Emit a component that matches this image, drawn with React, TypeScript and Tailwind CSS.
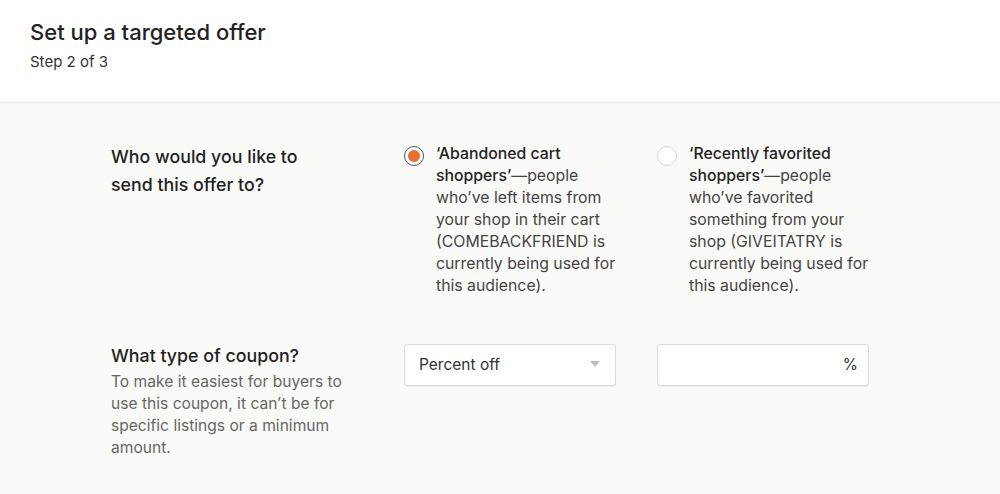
import React, { useState } from "react";

const font = { fontFamily: "Inter, 'Noto Sans', sans-serif" };

function Radio({ checked }: { checked: boolean }) {
  return (
    <span
      className={`mt-[3px] flex h-5 w-5 shrink-0 items-center justify-center rounded-full border bg-white ${
        checked ? "border-[#555]" : "border-[#d6d6d6]"
      }`}
    >
      {checked && <span className="h-3 w-3 rounded-full bg-[#eb6d2f]" />}
    </span>
  );
}

function Option({
  checked,
  title,
  body,
  onSelect,
}: {
  checked: boolean;
  title: string;
  body: string;
  onSelect: () => void;
}) {
  return (
    <label className="flex cursor-pointer gap-3" onClick={onSelect}>
      <Radio checked={checked} />
      <p className="w-[192px] text-[15.8px] leading-[22px] text-[#444]">
        <span className="font-medium text-[#222]">{title}</span>
        {body}
      </p>
    </label>
  );
}

export default function App() {
  const [audience, setAudience] = useState("abandoned");

  return (
    <div className="min-h-[494px] bg-[#fafaf8] text-[#222]" style={font}>
      {/* Header */}
      <div className="border-b border-[#e3e3e1] bg-white px-[30px] pt-[17px] pb-[30px]">
        <h1 className="text-[22px] leading-[30px] font-medium">Set up a targeted offer</h1>
        <p className="mt-[5px] text-[15px] leading-[20px] text-[#333]">Step 2 of 3</p>
      </div>

      {/* Body */}
      <div className="pl-[111px] pt-[40px]">
        <div className="flex">
          <div className="w-[293px]">
            <h2 className="w-[220px] text-[17.8px] leading-[28px] font-medium">
              Who would you like to send this offer to?
            </h2>
          </div>
          <div className="w-[253px]">
            <Option
              checked={audience === "abandoned"}
              onSelect={() => setAudience("abandoned")}
              title="‘Abandoned cart shoppers’"
              body="—people who’ve left items from your shop in their cart (COMEBACKFRIEND is currently being used for this audience)."
            />
          </div>
          <div>
            <Option
              checked={audience === "favorited"}
              onSelect={() => setAudience("favorited")}
              title="‘Recently favorited shoppers’"
              body="—people who’ve favorited something from your shop (GIVEITATRY is currently being used for this audience)."
            />
          </div>
        </div>

        <div className="mt-[47px] flex">
          <div className="w-[293px]">
            <h2 className="text-[17.8px] leading-[24px] font-medium">What type of coupon?</h2>
            <p className="mt-[3px] w-[245px] text-[15.6px] leading-[22px] text-[#666]">
              To make it easiest for buyers to use this coupon, it can’t be for specific listings or a minimum amount.
            </p>
          </div>
          <div className="w-[253px]">
            <div className="flex h-[42px] w-[212px] items-center justify-between rounded-[3px] border border-[#dcdcdc] bg-white px-[14px] shadow-[0_1px_1px_rgba(0,0,0,0.06)]">
              <span className="text-[15.5px] text-[#333]">Percent off</span>
              <svg width="10" height="6" viewBox="0 0 10 6" className="mb-[2px] mr-[1px]">
                <path d="M0 0h10L5 6z" fill="#bdbdbd" />
              </svg>
            </div>
          </div>
          <div>
            <div className="flex h-[42px] w-[212px] items-center justify-end rounded-[3px] border border-[#dcdcdc] bg-white px-[10px] shadow-[0_1px_1px_rgba(0,0,0,0.06)]">
              <span className="text-[15.5px] text-[#333]">%</span>
            </div>
          </div>
        </div>
      </div>
    </div>
  );
}
